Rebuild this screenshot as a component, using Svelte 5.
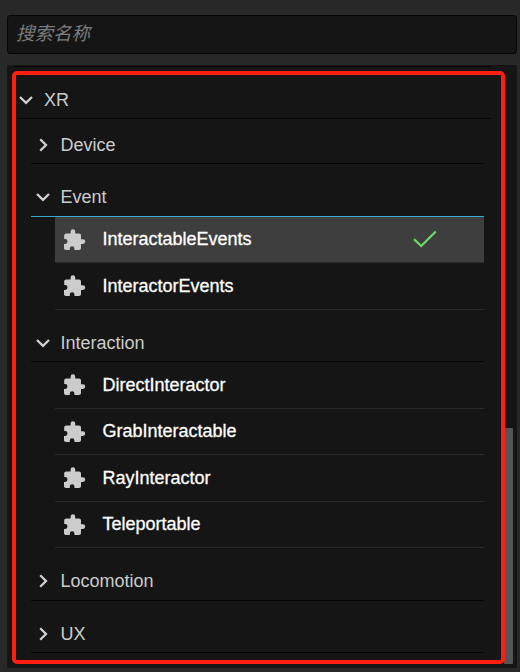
<script>
  const groups = [
    { name: 'Device', open: false, height: 45, drop: 1, items: [] },
    {
      name: 'Event', open: true, height: 53, drop: 0, active: true,
      items: [
        { name: 'InteractableEvents', height: 46, selected: true },
        { name: 'InteractorEvents', height: 47 }
      ]
    },
    {
      name: 'Interaction', open: true, height: 52, drop: 1,
      items: [
        { name: 'DirectInteractor', height: 47 },
        { name: 'GrabInteractable', height: 46 },
        { name: 'RayInteractor', height: 47 },
        { name: 'Teleportable', height: 46 }
      ]
    },
    { name: 'Locomotion', open: false, height: 53, drop: 0, items: [] },
    { name: 'UX', open: false, height: 52, drop: 1, items: [] }
  ];
</script>

{#snippet chevron(open)}
  <svg class="chevron" width="16" height="16" viewBox="0 0 16 16" fill="none" stroke="#d2d2d2" stroke-width="2.3">
    {#if open}
      <path d="M2 5 8 10.800 14 5" />
    {:else}
      <path d="M5.200 2.200 11 8 5.200 13.800" />
    {/if}
  </svg>
{/snippet}

<div class="app">
  <input class="search" type="text" placeholder="搜索名称" />
  <div class="panel">
    <div class="tree">
      <div class="header root low">
        {@render chevron(true)}
        <span>XR</span>
      </div>
      <div class="groups">
        {#each groups as group}
          <div class="header" class:active={group.active} class:low={group.drop} style="height: {group.height}px">
            {@render chevron(group.open)}
            <span>{group.name}</span>
          </div>
          {#if group.open}
            <div class="items">
              {#each group.items as item}
                <div class="item" class:selected={item.selected} style="height: {item.height}px">
                  <svg class="puzzle" width="24" height="24" viewBox="0 0 24 24" fill="#cccccc">
                    <path d="M20.900 11.300H19V7.500c0-1.200-.8-2-2-2h-3.800V3.500a2.300 2.300 0 0 0-4.600 0v2H4.400c-1.300 0-2.200.8-2.200 2v3.600h.9a2.400 2.400 0 0 1 0 4.800H2V20c0 1.200.8 2 2 2h3.800v-1.400a2.300 2.300 0 0 1 4.600 0V22H17c1.200 0 2-.8 2-2v-4.100h1.900a2.300 2.300 0 0 0 0-4.600z" />
                  </svg>
                  <span>{item.name}</span>
                  {#if item.selected}
                    <svg class="check" width="24" height="18" viewBox="0 0 24 18" fill="none" stroke="#6bd86b" stroke-width="2.300">
                      <path d="M1 9.200 8.200 16 22.800 1.500" />
                    </svg>
                  {/if}
                </div>
              {/each}
            </div>
          {/if}
        {/each}
      </div>
    </div>
    <div class="thumb"></div>
  </div>
  <div class="frame"></div>
</div>

<style>
  :global(body) {
    margin: 0;
    background: #282828;
  }
  .app {
    position: relative;
    box-sizing: border-box;
    width: 520px;
    height: 672px;
    padding: 15px 3px 4px 7px;
    display: flex;
    flex-direction: column;
    gap: 11px;
    background: #282828;
    color: #cccccc;
    font: 18px/22px 'Liberation Sans', 'Noto Sans CJK SC', sans-serif;
    overflow: hidden;
  }
  .search {
    box-sizing: border-box;
    flex: none;
    width: 100%;
    height: 39px;
    margin: 0;
    padding: 0 9px 1px 8px;
    border: 1px solid #050505;
    border-radius: 3px;
    outline: none;
    background: #151515;
    color: #cccccc;
    font: italic 18.5px 'Liberation Sans', 'Noto Sans CJK SC', sans-serif;
  }
  .search::placeholder {
    color: #7c7c7c;
    opacity: 1;
  }
  .panel {
    position: relative;
    box-sizing: border-box;
    flex: 1;
    padding: 1px 26px 0 7px;
    background: #151515;
  }
  .tree {
    border-top: 1px solid #050505;
  }
  .header {
    box-sizing: border-box;
    display: flex;
    align-items: flex-end;
    gap: 9.500px;
    padding: 0 0 8px 4px;
    border-bottom: 1px solid #050505;
  }
  .header.low {
    padding-bottom: 7px;
  }
  .header.root {
    height: 52px;
    gap: 10px;
  }
  .header.active {
    border-bottom-color: #35a9cf;
  }
  .chevron {
    flex: none;
    margin-bottom: 3px;
  }
  .groups {
    padding: 0 7px 0 17px;
  }
  .items {
    padding-left: 24px;
  }
  .item {
    box-sizing: border-box;
    display: flex;
    align-items: center;
    padding: 0 47px 0 7px;
    border-bottom: 1px solid #2a2a2a;
    color: #ffffff;
  }
  .item span {
    margin-left: 16.400px;
    padding-bottom: 1px;
    -webkit-text-stroke: 0.3px #ffffff;
  }
  .item.selected {
    background: #3e3e3e;
  }
  .puzzle {
    flex: none;
  }
  .check {
    margin-left: auto;
    margin-bottom: 1px;
  }
  .thumb {
    position: absolute;
    top: 363px;
    right: 4px;
    bottom: 4px;
    width: 9px;
    border-radius: 1px;
    background: #555555;
  }
  .frame {
    position: absolute;
    box-sizing: border-box;
    left: 11.500px;
    top: 71px;
    width: 493.500px;
    height: 592.500px;
    border: 4px solid #ff1e10;
    border-radius: 5px;
    pointer-events: none;
  }
</style>
